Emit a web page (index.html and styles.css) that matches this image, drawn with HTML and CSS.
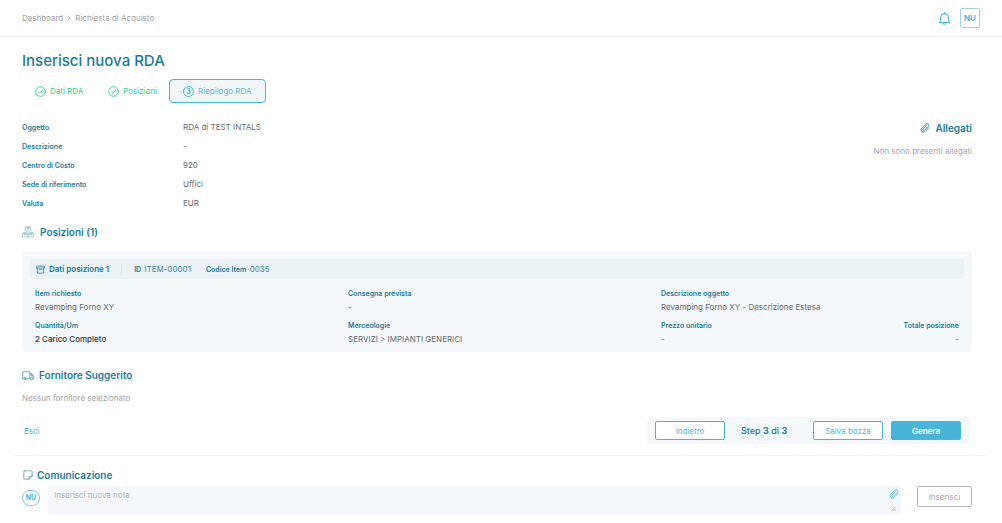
FILE: index.html
```html
<!DOCTYPE html>
<html lang="it">
	<head>
		<meta charset="UTF-8">
		<meta name="viewport" content="width=device-width, initial-scale=1.0">
		<title>Inserisci nuova RDA</title>
		<link rel="stylesheet" href="styles.css">
	</head>
	<body>

		<header class="topbar">
			<nav class="breadcrumb">
				<a href="#">Dashboard</a>
				<svg class="chevron" viewBox="0 0 4 6"><path d="M1 1l2 2-2 2"/></svg>
				<a href="#">Richiesta di Acquisto</a>
			</nav>
			<div class="topbar-right">
				<button type="button" class="bell" aria-label="Notifiche">
					<svg viewBox="0 0 24 24"><path d="M2.500 19.500h19c-2-2-2.500-4-2.500-9.500a7 7 0 0 0-14 0c0 5.500-.5 7.500-2.500 9.500zM12 3V1.200M9.500 20c.3 3.500 4.700 3.500 5 0"/></svg>
				</button>
				<button type="button" class="user">NU</button>
			</div>
		</header>

		<main class="page">
			<h1>Inserisci nuova RDA</h1>

			<div class="steps">
				<button type="button" class="step done">
					<svg viewBox="0 0 24 24"><circle cx="12" cy="12" r="10.500"/><path d="M7 12.500l3.500 3.500L17 9"/></svg>
					Dati RDA
				</button>
				<button type="button" class="step done">
					<svg viewBox="0 0 24 24"><circle cx="12" cy="12" r="10.500"/><path d="M7 12.500l3.500 3.500L17 9"/></svg>
					Posizioni
				</button>
				<button type="button" class="step active">
					<span class="step-number">3</span>
					Riepilogo RDA
				</button>
			</div>

			<section class="summary">
				<dl class="details">
					<dt>Oggetto</dt><dd>RDA di TEST INTALS</dd>
					<dt>Descrizione</dt><dd>-</dd>
					<dt>Centro di Costo</dt><dd>920</dd>
					<dt>Sede di riferimento</dt><dd>Uffici</dd>
					<dt>Valuta</dt><dd>EUR</dd>
				</dl>
				<div class="attachments">
					<h2>
						<svg class="clip" viewBox="0 0 24 24"><path d="M21.500 11l-9.300 9.300a5.600 5.600 0 0 1-8-8l9.700-9.700a4 4 0 0 1 5.700 5.700L10.300 17.600a2 2 0 0 1-3-3L15.500 6.500"/></svg>
						Allegati
					</h2>
					<p class="muted">Non sono presenti allegati</p>
				</div>
			</section>

			<section>
				<h2>
					<svg class="boxes" viewBox="0 0 24 24"><path d="M7 3l2-2h6l2 2v7H7zM7 3.500h10M10.500 3.500v2.500h3V3.500M1 15l2-2h6l2 2v7H1zM1 15.500h10M4.500 15.500V18h3v-2.500M13 15l2-2h6l2 2v7H13zM13 15.500h10M16.500 15.500V18h3v-2.500"/></svg>
					Posizioni (1)
				</h2>
				<div class="card">
					<div class="card-header">
						<h3>
							<svg viewBox="0 0 24 24"><path d="M1.500 3h21v5h-21zM3.500 8v13.500h17V8M8.500 12.500h7"/></svg>
							Dati posizione 1
						</h3>
						<p><b>ID</b> ITEM-00001</p>
						<p><b>Codice Item</b> 0035</p>
					</div>
					<div class="card-body">
						<dl>
							<dt>Item richiesto</dt>
							<dd>Revamping Forno XY</dd>
						</dl>
						<dl>
							<dt>Consegna prevista</dt>
							<dd>-</dd>
						</dl>
						<dl>
							<dt>Descrizione oggetto</dt>
							<dd>Revamping Forno XY - Descrizione Estesa</dd>
						</dl>
						<dl>
							<dt>Quantità/Um</dt>
							<dd class="quantity">2 Carico Completo</dd>
						</dl>
						<dl>
							<dt>Merceologie</dt>
							<dd>SERVIZI &gt; IMPIANTI GENERICI</dd>
						</dl>
						<div class="prices">
							<dl>
								<dt>Prezzo unitario</dt>
								<dd>-</dd>
							</dl>
							<dl class="total">
								<dt>Totale posizione</dt>
								<dd>-</dd>
							</dl>
						</div>
					</div>
				</div>
			</section>

			<section class="supplier">
				<h2>
					<svg class="truck" viewBox="0 0 26 22"><path d="M4 18H1.500V3h15.500v15H9M17 7h4l3.500 5v6H23M17 18h1M20.500 7v5h4"/><circle cx="6.500" cy="18" r="2.500"/><circle cx="20.500" cy="18" r="2.500"/></svg>
					Fornitore Suggerito
				</h2>
				<p class="muted">Nessun fornitore selezionato</p>
			</section>

			<div class="actions">
				<a href="#" class="exit">Esci</a>
				<div class="wizard">
					<button type="button" class="btn">Indietro</button>
					<span class="wizard-step">Step <b>3</b> di <b>3</b></span>
					<button type="button" class="btn">Salva bozza</button>
					<button type="button" class="btn primary">Genera</button>
				</div>
			</div>
		</main>

		<section class="notes">
			<h2>
				<svg class="note" viewBox="0 0 24 24"><path d="M3 2h18a1 1 0 0 1 1 1v12l-7 7H3a1 1 0 0 1-1-1V3a1 1 0 0 1 1-1zM22 15h-6a1 1 0 0 0-1 1v6"/></svg>
				<label for="new-note">Comunicazione</label>
			</h2>
			<form class="note-form">
				<span class="avatar">NU</span>
				<div class="note-box">
					<textarea id="new-note" placeholder="Inserisci nuova nota"></textarea>
					<button type="button" class="attach" aria-label="Allega file">
						<svg class="clip" viewBox="0 0 24 24"><path d="M21.500 11l-9.300 9.300a5.600 5.600 0 0 1-8-8l9.700-9.700a4 4 0 0 1 5.700 5.700L10.300 17.600a2 2 0 0 1-3-3L15.500 6.500"/></svg>
					</button>
					<svg class="grip" viewBox="0 0 6 6"><path d="M1 5.500L5.500 1M3.500 5.500l2-2"/></svg>
				</div>
				<button type="button" class="btn-insert">Inserisci</button>
			</form>
		</section>

	</body>
</html>
```

FILE: styles.css
```css
* {
    box-sizing: border-box;
    margin: 0;
    padding: 0;
}
body {
    background-color: #fff;
    color: #666b70;
    font-family: Inter, 'Liberation Sans', sans-serif;
    font-size: 8px;
    line-height: 12px;
}
button, textarea {
    font-family: inherit;
    font-size: 8px;
    line-height: 12px;
}
button {
    background: none;
    border: none;
    cursor: pointer;
}
a {
    color: inherit;
    text-decoration: none;
}
svg {
    flex: none;
    fill: none;
    stroke: currentColor;
    stroke-width: 2;
    stroke-linecap: round;
    stroke-linejoin: round;
}
h1 {
    color: #1a7b9b;
    font-size: 15px;
    font-weight: 500;
    line-height: 24px;
}
h2 {
    display: flex;
    align-items: center;
    gap: 5px;
    color: #1a7b9b;
    font-size: 10px;
    font-weight: 600;
    line-height: 16px;
}
dt {
    color: #1a7b9b;
    font-size: 7px;
    font-weight: 600;
}
.muted {
    color: #a3a5a7;
}

/* header */
.topbar {
    display: flex;
    justify-content: space-between;
    align-items: center;
    height: 37px;
    padding: 0 22px;
    border-bottom: 1px solid #e6f0f6;
}
.breadcrumb {
    display: flex;
    align-items: center;
    gap: 4px;
    color: #a0a2a4;
}
.chevron {
    width: 4px;
    height: 6px;
    stroke-width: 1;
}
.topbar-right {
    display: flex;
    align-items: center;
    gap: 9px;
}
.bell {
    display: flex;
    color: #4ab5d8;
}
.bell svg {
    width: 13px;
    height: 13px;
}
.user {
    width: 20px;
    height: 20px;
    border: 1px solid #a9cfe0;
    border-radius: 2px;
    color: #4ab5d8;
    font-weight: 700;
}

.page {
    padding: 12px 30px 11px 22px;
}

/* wizard steps */
.steps {
    display: flex;
    margin-top: 6px;
}
.step {
    display: flex;
    align-items: center;
    gap: 4px;
    height: 24px;
    padding: 0 11px 0 12px;
    border: 1px solid transparent;
    border-radius: 4px;
}
.step svg {
    width: 11px;
    height: 11px;
}
.step.done {
    color: #2fd08a;
}
.step.active {
    padding: 0 13px;
    border-color: #4ab5d8;
    background-color: #f0f5f8;
    color: #6cbcd8;
}
.step-number {
    width: 11px;
    height: 11px;
    border: 1px solid #4ab5d8;
    border-radius: 50%;
    color: #4ab5d8;
    font-size: 7px;
    font-weight: 700;
    line-height: 9px;
    text-align: center;
}

/* summary */
.summary {
    display: flex;
    justify-content: space-between;
    margin: 15px 0 11px;
}
.details {
    display: grid;
    grid-template-columns: 161px auto;
    line-height: 18px;
}
.details dt {
    padding-top: 1px;
}
.attachments {
    display: flex;
    flex-direction: column;
    align-items: flex-end;
    gap: 9px;
    padding-top: 2px;
}
.clip {
    width: 10px;
    height: 10px;
}
.boxes {
    width: 12px;
    height: 12px;
    margin-right: 1px;
    stroke-width: 1;
}

/* position card */
.card {
    margin-top: 11px;
    padding: 8px 8px 6px;
    border-radius: 4px;
    background-color: #f4f8fb;
}
.card-header {
    display: flex;
    align-items: center;
    height: 20px;
    padding: 0 6px;
    border-radius: 2px;
    background-color: #eaf2f5;
    color: #3f8ba6;
}
.card-header h3 {
    display: flex;
    align-items: center;
    gap: 4px;
    margin-right: 12px;
    padding-right: 12px;
    border-right: 1px solid #dde8ed;
    color: #1a7b9b;
    font-size: 8px;
    font-weight: 600;
}
.card-header svg {
    width: 9px;
    height: 9px;
}
.card-header p {
    margin-right: 15px;
}
.card-header b {
    margin-right: 1px;
    color: #1a7b9b;
    font-size: 7px;
    font-weight: 600;
}
.card-body {
    display: grid;
    grid-template-columns: repeat(3, 1fr);
    gap: 6px 15px;
    padding: 9px 5px 0;
}
.card-body dd {
    line-height: 14px;
}
.card-body .quantity {
    color: #36393c;
    font-weight: 500;
}
.prices {
    display: flex;
    justify-content: space-between;
}
.total {
    text-align: right;
}

.supplier {
    margin-top: 15px;
}
.supplier .muted {
    margin-top: 9px;
}
.truck {
    width: 12px;
    height: 11px;
}

/* actions */
.actions {
    display: flex;
    justify-content: space-between;
    align-items: center;
    margin-top: 13px;
    padding: 0 2px;
}
.exit {
    color: #4ab5d8;
}
.wizard {
    display: flex;
    align-items: center;
    padding: 4px 9px 4px 8px;
    border-radius: 4px;
    background-color: #f4f8fb;
}
.btn {
    width: 70px;
    height: 19px;
    border: 1px solid #4ab5d8;
    border-radius: 2px;
    background-color: #fff;
    color: #4ab5d8;
}
.btn.primary {
    margin-left: 8px;
    background-color: #48b5d8;
    color: #fff;
    font-weight: 600;
}
.wizard-step {
    width: 88px;
    padding-left: 16px;
    color: #1a7b9b;
    font-size: 9px;
    font-weight: 500;
}

/* notes */
.notes {
    margin: 0 16px 0 14px;
    padding: 11px 14px 8px 8px;
    border-top: 1px solid #edf4f8;
}
.notes h2 {
    gap: 4px;
    padding-left: 1px;
}
.note {
    width: 10px;
    height: 10px;
}
.boxes, .truck, .note {
    color: #5ba0b7;
}
.note-form {
    display: flex;
    align-items: flex-start;
    margin-top: 3px;
}
.avatar {
    width: 18px;
    height: 16px;
    margin: 4px 8px 0 0;
    border: 1px solid #7cc8e2;
    border-radius: 8px;
    color: #4ab5d8;
    font-size: 7px;
    font-weight: 700;
    line-height: 14px;
    text-align: center;
}
.note-box {
    position: relative;
    flex: 1;
    margin-right: 16px;
}
.note-box textarea {
    display: block;
    width: 100%;
    height: 29px;
    padding: 3px 20px 3px 6px;
    border: none;
    outline: none;
    resize: none;
    background-color: #f4f8fb;
}
.note-box textarea::placeholder {
    color: #afb5b9;
}
.attach {
    position: absolute;
    top: 3px;
    right: 2px;
    color: #4ab5d8;
}
.attach svg {
    display: block;
}
.grip {
    position: absolute;
    right: 5px;
    bottom: 4px;
    width: 5px;
    height: 5px;
    color: #a0a2a4;
    stroke-width: 1;
}
.btn-insert {
    width: 55px;
    height: 21px;
    border: 1px solid #b5b7b9;
    border-radius: 2px;
    color: #a3a5a7;
}
```
